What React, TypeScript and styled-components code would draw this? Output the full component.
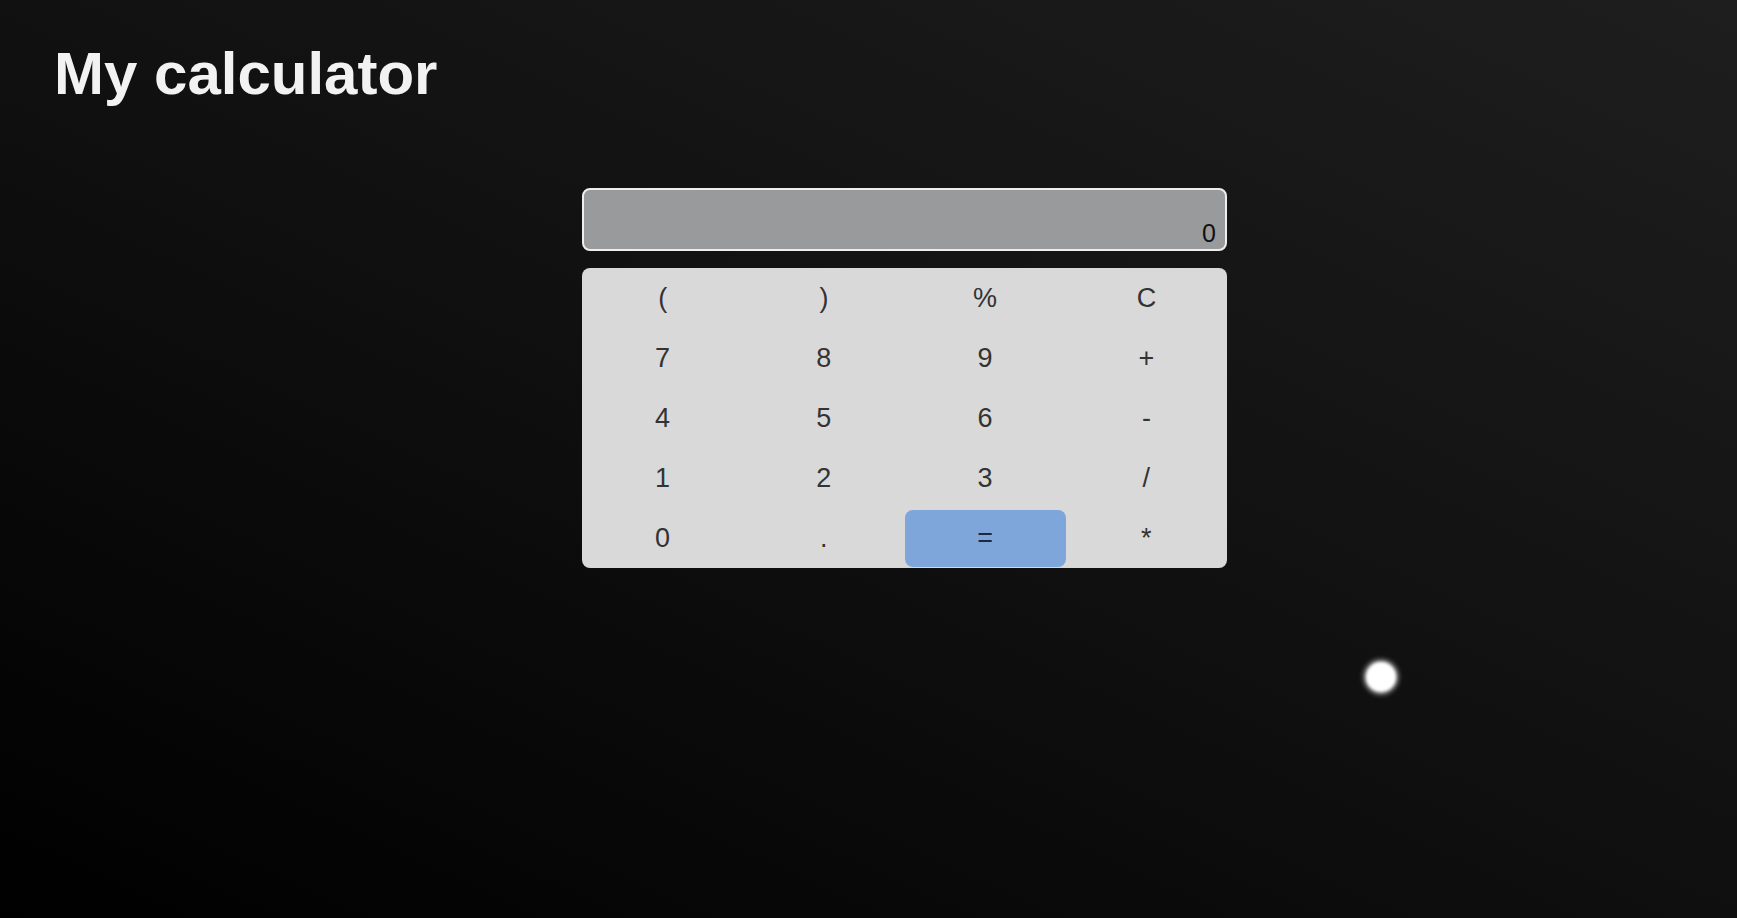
import styled, { createGlobalStyle } from 'styled-components';

const KEYS: string[] = [
  '(', ')', '%', 'C',
  '7', '8', '9', '+',
  '4', '5', '6', '-',
  '1', '2', '3', '/',
  '0', '.', '=', '*',
];

const GlobalStyle = createGlobalStyle`
  html, body {
    margin: 0;
    padding: 0;
  }
  body {
    background: #000;
    font-family: "Liberation Sans", Arial, sans-serif;
    overflow: hidden;
  }
`;

const Page = styled.div`
  position: relative;
  min-height: 100vh;
  background: linear-gradient(205deg, #1e1e1e 0%, #101010 50%, #000 100%);
  overflow: hidden;
`;

const Title = styled.h1`
  margin: 0;
  padding: 40px 0 0 54px;
  font-size: 60px;
  line-height: 68px;
  font-weight: 700;
  color: #f2f2f2;
`;

const Calculator = styled.div`
  display: flex;
  flex-direction: column;
  gap: 17px;
  width: 645px;
  margin: 80px 0 0 582px;
`;

const Display = styled.div`
  box-sizing: border-box;
  height: 63px;
  display: flex;
  align-items: flex-end;
  justify-content: flex-end;
  padding: 0 9px 3px;
  border: 2px solid #eeeeee;
  border-radius: 8px;
  background: #999a9b;
  color: #111;
  font-size: 25px;
  line-height: 25px;
`;

const Keypad = styled.div`
  display: grid;
  grid-template-columns: repeat(4, 1fr);
  grid-template-rows: repeat(5, 60px);
  border-radius: 8px;
  background: #d9d9d9;
  overflow: hidden;
`;

const Key = styled.button<{ $primary?: boolean }>`
  margin: ${(p) => (p.$primary ? '2px 0 1px' : '0')};
  padding: 0;
  border: none;
  border-radius: ${(p) => (p.$primary ? '8px' : '0')};
  background: ${(p) => (p.$primary ? '#7fa6da' : 'transparent')};
  color: ${(p) => (p.$primary ? '#1b2a44' : '#333')};
  font-family: "Liberation Sans", Arial, sans-serif;
  font-size: 27px;
  cursor: pointer;
`;

const Glow = styled.div`
  position: absolute;
  left: 1366px;
  top: 662px;
  width: 30px;
  height: 30px;
  border-radius: 50%;
  background: #fff;
  box-shadow: 0 0 4px 2px rgba(255, 255, 255, 0.7);
  filter: blur(1.5px);
`;

const App: React.FC = () => {
  return (
    <Page>
      <GlobalStyle />
      <Title>My calculator</Title>
      <Calculator>
        <Display>0</Display>
        <Keypad>
          {KEYS.map((k) => (
            <Key key={k} $primary={k === '='}>
              {k}
            </Key>
          ))}
        </Keypad>
      </Calculator>
      <Glow />
    </Page>
  );
};

export default App;
